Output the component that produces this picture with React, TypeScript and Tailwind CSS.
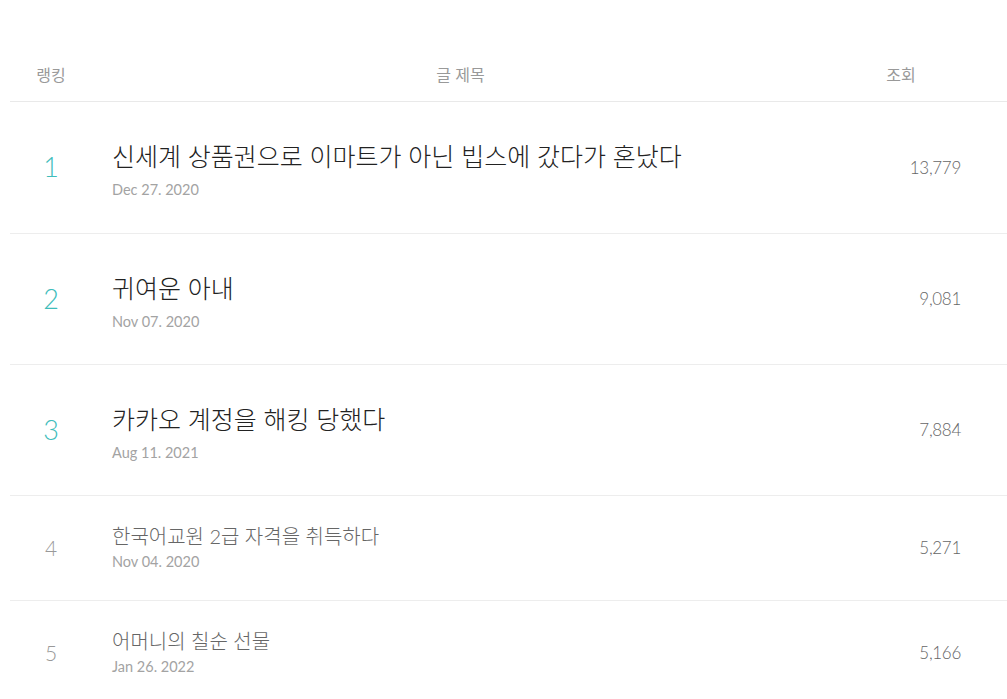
const rows = [
  { rank: 1, title: "신세계 상품권으로 이마트가 아닌 빕스에 갔다가 혼났다", date: "Dec 27. 2020", views: "13,779", top: true },
  { rank: 2, title: "귀여운 아내", date: "Nov 07. 2020", views: "9,081", top: true },
  { rank: 3, title: "카카오 계정을 해킹 당했다", date: "Aug 11. 2021", views: "7,884", top: true },
  { rank: 4, title: "한국어교원 2급 자격을 취득하다", date: "Nov 04. 2020", views: "5,271", top: false },
  { rank: 5, title: "어머니의 칠순 선물", date: "Jan 26. 2022", views: "5,166", top: false },
];

export default function App() {
  return (
    <div
      className="min-h-screen bg-white pt-[48px] pl-[10px] overflow-hidden"
      style={{ fontFamily: "Lato, 'Noto Sans CJK KR', sans-serif" }}
    >
      {/* Header */}
      <div className="flex items-center h-[54px] border-b border-[#e9e9e9] text-[16px] text-[#999]">
        <div className="w-[82px] text-center">랭킹</div>
        <div className="flex-1 text-center pr-[12px]">글 제목</div>
        <div className="w-[120px] mr-[46px] text-center">조회</div>
      </div>

      {rows.map((r) => (
        <div
          key={r.rank}
          className={`flex items-center border-b border-[#ededed] ${
            r.rank === 1 ? "h-[132px]" : r.top ? "h-[131px]" : "h-[105px]"
          }`}
        >
          <div
            className={`w-[82px] text-center font-light ${
              r.top ? "text-[27px] text-[#3fbdbb]" : "text-[21px] text-[#999]"
            }`}
          >
            {r.rank}
          </div>
          <div className={`flex-1 pl-[20px] flex flex-col ${r.top ? "pt-[4px] gap-[7px]" : "gap-[4px]"}`}>
            <div
              className={`font-light ${
                r.top
                  ? "text-[25px] leading-[34px] text-[#222]"
                  : "text-[20px] leading-[24px] text-[#666]"
              }`}
            >
              {r.title}
            </div>
            <div className="text-[14.5px] leading-[20px] text-[#a3a3a3]">{r.date}</div>
          </div>
          <div className="w-[120px] mr-[46px] text-right text-[17px] font-light tracking-[-0.3px] text-[#666]">
            {r.views}
          </div>
        </div>
      ))}
    </div>
  );
}
